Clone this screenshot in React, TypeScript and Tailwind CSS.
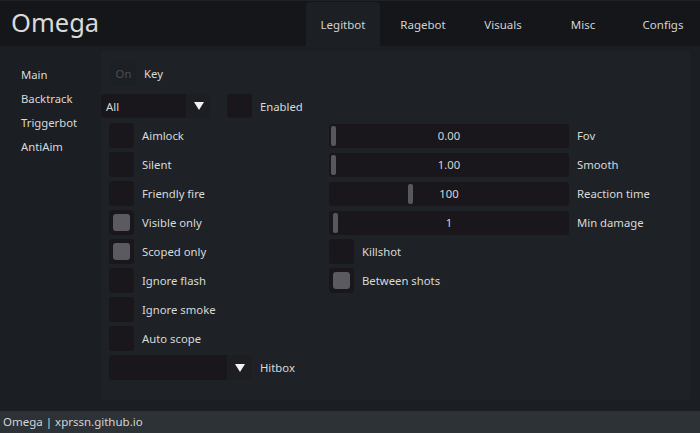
import React from "react";

const font = { fontFamily: '"Noto Sans", "Open Sans", sans-serif' };

const tabs = ["Legitbot", "Ragebot", "Visuals", "Misc", "Configs"];
const side = ["Main", "Backtrack", "Triggerbot", "AntiAim"];

function Arrow() {
  return (
    <svg width="10" height="8" viewBox="0 0 10 8">
      <polygon points="0,0 10,0 5,8" fill="#f2f2f2" />
    </svg>
  );
}

function Check({ on = false }: { on?: boolean }) {
  return (
    <div className="w-[25px] h-[25px] rounded-[3px] bg-[#1a171c] flex items-center justify-center shrink-0">
      {on && <div className="w-[17px] h-[17px] rounded-[3px] bg-[#5b5a61]" />}
    </div>
  );
}

function CheckRow({ label, on }: { label: string; on?: boolean }) {
  return (
    <div className="flex items-center h-[25px]">
      <Check on={on} />
      <span className="ml-[8px] pt-[2px] text-[#d9d9d9]">{label}</span>
    </div>
  );
}

// Slider: knob position given in px from left edge
function Slider({ value, knob, label }: { value: string; knob: number; label: string }) {
  return (
    <div className="flex items-center h-[25px]">
      <div className="relative w-[240px] h-[24px] rounded-[3px] bg-[#1a171c] flex items-center justify-center">
        <div
          className="absolute top-[2px] w-[5px] h-[20px] rounded-[2px] bg-[#58575e]"
          style={{ left: knob }}
        />
        <span className="pt-[2px] text-[#d6d6d6]">{value}</span>
      </div>
      <span className="ml-[8px] pt-[2px] text-[#d9d9d9]">{label}</span>
    </div>
  );
}

export default function App() {
  const left: [string, boolean][] = [
    ["Aimlock", false],
    ["Silent", false],
    ["Friendly fire", false],
    ["Visible only", true],
    ["Scoped only", true],
    ["Ignore flash", false],
    ["Ignore smoke", false],
    ["Auto scope", false],
  ];

  const right: React.ReactNode[] = [
    <Slider key="a" value="0.00" knob={2} label="Fov" />,
    <Slider key="b" value="1.00" knob={2} label="Smooth" />,
    <Slider key="c" value="100" knob={79} label="Reaction time" />,
    <Slider key="d" value="1" knob={4} label="Min damage" />,
    <CheckRow key="e" label="Killshot" />,
    <CheckRow key="f" label="Between shots" on />,
    <div key="g" className="h-[25px]" />,
    <div key="h" className="h-[25px]" />,
  ];

  return (
    <div
      className="w-[700px] h-[433px] bg-[#1b1e22] flex flex-col overflow-hidden text-[11.3px] text-[#d9d9d9]"
      style={font}
    >
      {/* header */}
      <div className="h-[46px] shrink-0 bg-[#14161a] border-t border-[#1e2125] flex">
        <div className="w-[303px] shrink-0 pl-[11px] flex items-center text-[25.5px] text-[#dadada] leading-none pb-[2px]">
          Omega
        </div>
        {tabs.map((t, i) => (
          <div key={t} className="w-[80px] shrink-0 px-[3px] pt-[1px]">
            <div
              className={
                "h-full rounded-t-[4px] flex items-center justify-center pt-[2px] text-[11.5px] text-[#d2d2d2] " +
                (i === 0 ? "bg-[#1c1f23]" : "")
              }
            >
              {t}
            </div>
          </div>
        ))}
      </div>

      {/* body */}
      <div className="flex-1 flex">
        <div className="w-[101px] shrink-0 flex flex-col pl-[21px] pt-[17px]">
          {side.map((s) => (
            <div key={s} className="leading-[24px] text-[#d9d9d9]">
              {s}
            </div>
          ))}
        </div>

        <div className="w-[589px] mt-[5px] h-[349px] rounded-[4px] bg-[#1e2226] flex flex-col pt-[10px]">
          {/* key row */}
          <div className="flex items-center h-[25px] ml-[10px]">
            <div className="w-[25px] h-[25px] rounded-[3px] bg-[#1c1f23] flex items-center justify-center pt-[2px] text-[#4b4e53]">
              On
            </div>
            <span className="ml-[8px] pt-[2px]">Key</span>
          </div>

          {/* combo row */}
          <div className="flex items-center h-[24px] mt-[8px]">
            <div className="flex w-[109px] h-[24px] rounded-[3px] overflow-hidden">
              <div className="flex-1 bg-[#1a171c] pl-[5px] pt-[2px] flex items-center">All</div>
              <div className="w-[24px] bg-[#1d1e22] flex items-center justify-center pl-[1px]">
                <Arrow />
              </div>
            </div>
            <div className="ml-[17px]">
              <div className="w-[25px] h-[24px] rounded-[3px] bg-[#1a171c]" />
            </div>
            <span className="ml-[8px] pt-[2px]">Enabled</span>
          </div>

          {/* two columns */}
          <div className="flex flex-col gap-[4px] mt-[5px] ml-[8px]">
            {left.map(([label, on], i) => (
              <div key={label} className="flex">
                <div className="w-[220px] shrink-0">
                  <CheckRow label={label} on={on} />
                </div>
                {right[i]}
              </div>
            ))}
          </div>

          {/* hitbox */}
          <div className="flex items-center h-[25px] mt-[4px] ml-[8px]">
            <div className="flex w-[143px] h-[25px] rounded-[3px] overflow-hidden">
              <div className="flex-1 bg-[#1a171c]" />
              <div className="w-[25px] bg-[#1d1e22] flex items-center justify-center">
                <Arrow />
              </div>
            </div>
            <span className="ml-[8px] pt-[2px]">Hitbox</span>
          </div>
        </div>
      </div>

      {/* footer */}
      <div className="h-[22px] shrink-0 bg-[#2d3236] pl-[3px] flex items-center text-[11.5px] text-[#d4d4d4]">
        Omega | xprssn.github.io
      </div>
    </div>
  );
}
